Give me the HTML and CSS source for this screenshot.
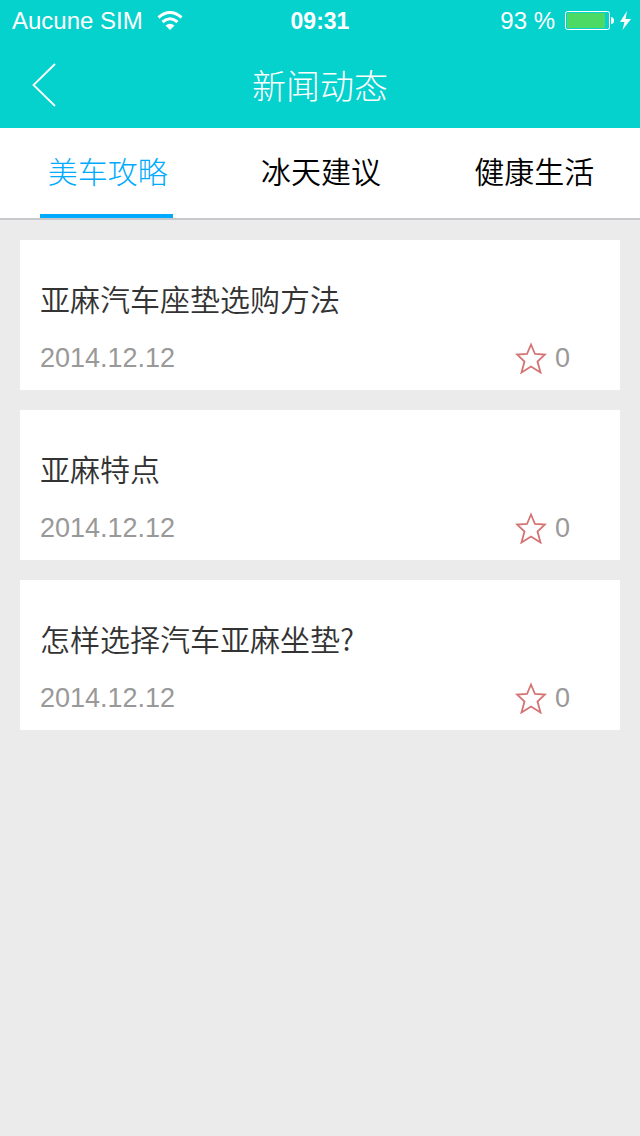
FILE: index.html
```html
<!DOCTYPE html>
<html lang="zh-CN">
<head>
<meta charset="utf-8">
<meta name="viewport" content="width=device-width, initial-scale=1">
<title>新闻动态</title>
<link rel="stylesheet" href="styles.css">
</head>
<body>
<svg class="defs" aria-hidden="true">
  <symbol id="star" viewBox="0 0 32 32">
    <path d="M16 2.500 L20 12 L30 12.500 L22.500 19.500 L25.500 30.500 L16 24.500 L6.500 30.500 L9.500 19.500 L2 12.500 L12 12 Z" fill="none" stroke="currentColor" stroke-width="1.800"/>
  </symbol>
</svg>
<header class="header">
  <div class="status">
    <div class="status-left">
      <span>Aucune SIM</span>
      <svg class="wifi" viewBox="0 0 26 20" aria-hidden="true">
        <path d="M1.500 6.500 Q13 -3.500 24.500 6.500" fill="none" stroke="currentColor" stroke-width="3"/>
        <path d="M5.500 11 Q13 4.500 20.500 11" fill="none" stroke="currentColor" stroke-width="3"/>
        <path d="M13 19 L8.500 14.500 Q13 11 17.500 14.500 Z" fill="currentColor"/>
      </svg>
    </div>
    <time class="clock">09:31</time>
    <div class="status-right">
      <span>93 %</span>
      <svg class="battery" viewBox="0 0 67 20" aria-hidden="true">
        <rect x="0.500" y="0.500" width="44" height="18" rx="2" fill="none" stroke="currentColor"/>
        <rect x="2" y="2" width="38" height="15" fill="#4cd964"/>
        <path d="M46 6 Q49 6 49 9.500 Q49 13 46 13 Z" fill="currentColor"/>
        <path d="M62 0 L55 11 H59.500 L57.500 19 L66 8 H60.500 Z" fill="currentColor"/>
      </svg>
    </div>
  </div>
  <div class="nav">
    <button class="back" type="button" aria-label="返回">
      <svg class="chevron" viewBox="0 0 24 44" aria-hidden="true"><path d="M23 1 L1.500 22 L23 43" fill="none" stroke="currentColor" stroke-width="1.800"/></svg>
    </button>
    <h1 class="title">新闻动态</h1>
  </div>
</header>
<nav class="tabs">
  <a class="tab tab-active" href="#guide" aria-current="page">美车攻略</a>
  <a class="tab" href="#advice">冰天建议</a>
  <a class="tab" href="#health">健康生活</a>
</nav>
<main class="list">
  <article class="card">
    <h2 class="card-title">亚麻汽车座垫选购方法</h2>
    <div class="meta">
      <time datetime="2014-12-12">2014.12.12</time>
      <button class="like" type="button" aria-label="收藏 0"><svg class="star" aria-hidden="true"><use href="#star"/></svg>0</button>
    </div>
  </article>
  <article class="card">
    <h2 class="card-title">亚麻特点</h2>
    <div class="meta">
      <time datetime="2014-12-12">2014.12.12</time>
      <button class="like" type="button" aria-label="收藏 0"><svg class="star" aria-hidden="true"><use href="#star"/></svg>0</button>
    </div>
  </article>
  <article class="card">
    <h2 class="card-title">怎样选择汽车亚麻坐垫?</h2>
    <div class="meta">
      <time datetime="2014-12-12">2014.12.12</time>
      <button class="like" type="button" aria-label="收藏 0"><svg class="star" aria-hidden="true"><use href="#star"/></svg>0</button>
    </div>
  </article>
</main>
</body>
</html>
```
FILE: styles.css
```css
* {
  box-sizing: border-box;
}

body {
  margin: 0;
  min-height: 100vh;
  background: #ebebeb;
  color: #333;
  font-family: "Liberation Sans", "Noto Sans CJK SC", sans-serif;
  font-weight: 300;
}

button {
  padding: 0;
  border: 0;
  background: none;
  color: inherit;
  font: inherit;
}

svg {
  display: block;
}

.defs {
  display: none;
}

.header {
  background: #05d1cd;
  color: #fff;
}

.status {
  display: grid;
  grid-template-columns: 1fr auto 1fr;
  align-items: center;
  height: 42px;
  padding: 0 8px 0 12px;
  font-size: 24px;
  line-height: 42px;
}

.status-left,
.status-right {
  display: flex;
  align-items: center;
  gap: 14px;
}

.status-right {
  justify-content: flex-end;
  gap: 10px;
}

.clock {
  margin-right: 4px;
  font-size: 23px;
  font-weight: 700;
}

.wifi {
  width: 26px;
  height: 20px;
}

.battery {
  width: 67px;
  height: 20px;
}

.nav {
  display: grid;
  grid-template-columns: 64px 1fr 64px;
  align-items: center;
  height: 86px;
}

.back {
  height: 64px;
  padding-left: 32px;
}

.chevron {
  width: 24px;
  height: 44px;
}

.title {
  margin: 0;
  padding-top: 4px;
  font-size: 34px;
  font-weight: 300;
  line-height: 82px;
  text-align: center;
}

.tabs {
  display: grid;
  grid-template-columns: repeat(3, 1fr);
  background: #fff;
  border-bottom: 2px solid #c8c7cc;
}

.tab {
  margin: 0 40px;
  padding-top: 4px;
  padding-left: 2px;
  border-bottom: 4px solid transparent;
  color: #000;
  font-size: 30px;
  font-weight: 350;
  line-height: 82px;
  text-align: center;
  text-decoration: none;
  white-space: nowrap;
}

.tab-active {
  border-color: #00aaff;
  color: #00aaff;
  font-weight: 300;
}

.list {
  display: grid;
  gap: 20px;
  padding: 20px;
}

.card {
  padding: 36px 50px 12px 20px;
  background: #fff;
}

.card-title {
  margin: 0 0 18px;
  font-family: "Noto Sans CJK SC", sans-serif;
  font-size: 30px;
  font-weight: 350;
  line-height: 44px;
}

.meta {
  display: flex;
  align-items: center;
  justify-content: space-between;
  color: #999;
  font-size: 27px;
  line-height: 40px;
}

.like {
  display: flex;
  align-items: center;
  gap: 8px;
}

.star {
  width: 32px;
  height: 32px;
  color: #d47474;
}
```
